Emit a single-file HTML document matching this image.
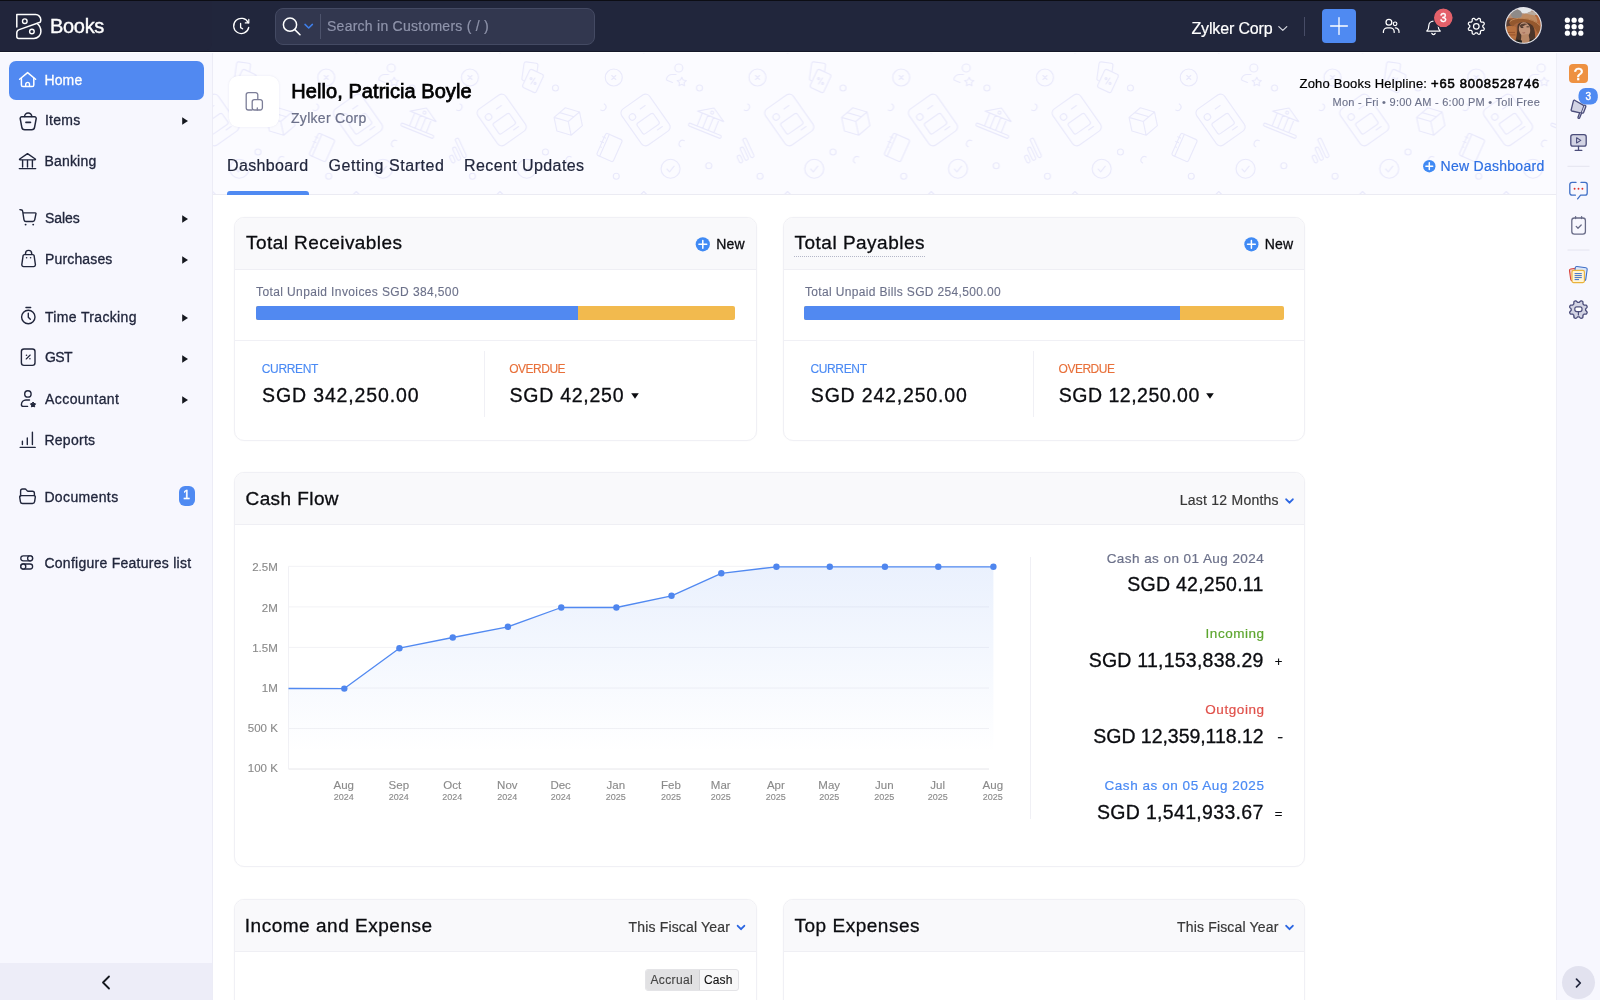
<!DOCTYPE html>
<html lang="en"><head><meta charset="utf-8"><title>Books - Dashboard</title>
<style>
*{box-sizing:border-box;margin:0;padding:0}
html,body{width:1600px;height:1000px;overflow:hidden;background:#fff}
body{will-change:transform;font-family:"Liberation Sans",sans-serif;position:relative;color:#21263c}
.t{position:absolute;line-height:1;white-space:nowrap}
.abs{position:absolute}
svg{position:absolute;overflow:visible}
#topbar{position:absolute;left:0;top:0;width:1600px;height:52px;background:#21263c;border-top:1px solid #0c0d14;border-bottom:1px solid #15182a}
#side{position:absolute;left:0;top:52px;width:213px;height:948px;background:#f7f7fe;border-right:1px solid #ececf6}
#hdr{position:absolute;left:213px;top:52px;width:1343px;height:143px;background:#fbfbff;border-bottom:1px solid #ebebf3;overflow:hidden}
#rail{position:absolute;left:1556px;top:52px;width:44px;height:948px;background:#f7f7fe;border-left:1px solid #efeff7}
.card{position:absolute;background:#fff;border:1px solid #f0f0f5;border-radius:10px;overflow:hidden;box-shadow:0 0 2px rgba(0,0,0,.03)}
.card .ch{position:absolute;left:0;top:0;right:0;background:#f9f9fb;border-bottom:1px solid #efeff4}

</style></head><body>
<div id="topbar"></div>
<div class="abs" style="left:0;top:1px;width:212px;height:50px;background:#21253b;border-radius:0 0 8px 0"></div>
<div class="t " style="left:50.00px;top:16.00px;font-size:20px;color:#fff;-webkit-text-stroke:0.4px;letter-spacing:-0.317px;">Books</div>
<div class="abs" style="left:275px;top:8px;width:320px;height:37px;background:#32374f;border:1px solid #444a63;border-radius:8px"></div>
<div class="abs" style="left:320px;top:14px;width:1px;height:25px;background:#4d536c"></div>
<div class="t " style="left:327.00px;top:19.00px;font-size:14px;color:#8f94ab;-webkit-text-stroke:0.2px;letter-spacing:0.256px;">Search in Customers ( / )</div>
<div class="t " style="left:1191.50px;top:21.00px;font-size:16px;color:#fff;-webkit-text-stroke:0.2px;letter-spacing:-0.153px;">Zylker Corp</div>
<div class="abs" style="left:1304px;top:17px;width:1px;height:19px;background:#474c66"></div>
<div class="abs" style="left:1322px;top:9px;width:34px;height:34px;background:#4f8af2;border-radius:4px"></div>
<svg style="left:1504.6px;top:7.1px" width="36.9" height="36.9" viewBox="0 0 37 37"><defs><clipPath id="avc"><circle cx="18.5" cy="18.5" r="17.3"/></clipPath><filter id="avb" x="-10%" y="-10%" width="120%" height="120%"><feGaussianBlur stdDeviation="0.55"/></filter></defs><circle cx="18.5" cy="18.5" r="18.45" fill="#e4e4ea"/><g clip-path="url(#avc)"><g filter="url(#avb)"><rect width="37" height="37" fill="#a5653f"/><rect x="0" y="0" width="37" height="11" fill="#b08d78"/><ellipse cx="20" cy="2.5" rx="7" ry="4" fill="#e4e7ea"/><ellipse cx="11.5" cy="7" rx="5.5" ry="4.5" fill="#8e8a88"/><ellipse cx="27" cy="7" rx="5" ry="2.6" fill="#b9a99c"/><rect x="30" y="8" width="7" height="24" fill="#b5683b"/><ellipse cx="4.5" cy="17" rx="4" ry="4.5" fill="#5a3d30"/><path d="M1 20 Q6 17.5 11 20 L12 32 L3 31 Z" fill="#b8713f"/><path d="M2.5 25.5 H10 M3 28 H10.5" stroke="#94502a" stroke-width="0.9"/><path d="M16.5 13 Q17 6.5 21 6.8 L29 8.2 Q32 9 32.5 15 Z" fill="#bd8a62"/><path d="M4 15.5 Q5 10.5 17 11.2 Q30 11.5 35.5 19 Q36.5 24 33 26.5 Q29 17.5 19 15.6 Q11 14.6 8 19.5 Q5 18.5 4 15.5 Z" fill="#94592f"/><path d="M5 14.5 Q9 10.8 18 11.4 Q29 12 35 18.5" stroke="#c08a5c" stroke-width="1" fill="none"/><path d="M12.5 19 Q13 15.2 19 15.4 Q27 16 29 21 Q31 27 30 37 L9 37 Q12.5 30 12.5 19 Z" fill="#4b3429"/><ellipse cx="19.6" cy="22.6" rx="5.6" ry="7.4" fill="#c3957a" transform="rotate(-12 19.6 22.6)"/><path d="M16.5 28 L23.5 27 L25.5 37 L15.5 37 Z" fill="#b88766"/><path d="M14.5 18.5 Q17 15.8 23 17 Q19 17.8 16 21 Z" fill="#5a3f31"/><path d="M16.2 20.6 h2.2 M21.6 19.9 h2.4" stroke="#3b2a22" stroke-width="0.9"/><path d="M17.6 25.8 q1.4 .6 2.6 -.1" stroke="#9c5f50" stroke-width="0.9" fill="none"/><path d="M9 37 L12 32.5 L17 33.5 L17 37 Z M24.5 33 L30 32 L31 37 L25 37 Z" fill="#24211f"/></g></g></svg>
<div id="side"></div>
<div class="abs" style="left:8.5px;top:60.5px;width:195px;height:39px;background:#5189f1;border-radius:7px"></div>
<div class="t " style="left:44.40px;top:73.00px;font-size:14px;color:#fff;-webkit-text-stroke:0.3px;letter-spacing:0.164px;">Home</div>
<div class="t " style="left:45.00px;top:113.00px;font-size:14px;color:#21263c;-webkit-text-stroke:0.3px;letter-spacing:0.234px;">Items</div>
<div class="t " style="left:44.40px;top:154.00px;font-size:14px;color:#21263c;-webkit-text-stroke:0.3px;letter-spacing:0.201px;">Banking</div>
<div class="t " style="left:45.00px;top:211.00px;font-size:14px;color:#21263c;-webkit-text-stroke:0.3px;letter-spacing:-0.044px;">Sales</div>
<div class="t " style="left:45.00px;top:252.00px;font-size:14px;color:#21263c;-webkit-text-stroke:0.3px;letter-spacing:0.151px;">Purchases</div>
<div class="t " style="left:45.00px;top:310.00px;font-size:14px;color:#21263c;-webkit-text-stroke:0.3px;letter-spacing:0.339px;">Time Tracking</div>
<div class="t " style="left:45.00px;top:350.00px;font-size:14px;color:#21263c;-webkit-text-stroke:0.3px;letter-spacing:-0.593px;">GST</div>
<div class="t " style="left:45.00px;top:392.00px;font-size:14px;color:#21263c;-webkit-text-stroke:0.3px;letter-spacing:0.435px;">Accountant</div>
<div class="t " style="left:44.40px;top:433.00px;font-size:14px;color:#21263c;-webkit-text-stroke:0.3px;letter-spacing:0.283px;">Reports</div>
<div class="t " style="left:44.40px;top:490.00px;font-size:14px;color:#21263c;-webkit-text-stroke:0.3px;letter-spacing:0.366px;">Documents</div>
<div class="t " style="left:44.40px;top:556.00px;font-size:14px;color:#21263c;-webkit-text-stroke:0.3px;letter-spacing:0.268px;">Configure Features list</div>
<svg style="left:181.8px;top:117.3px" width="6.2" height="8" viewBox="0 0 6.2 8"><path d="M0.2 0.2 L6 4 L0.2 7.8Z" fill="#15181f"/></svg>
<svg style="left:181.8px;top:214.8px" width="6.2" height="8" viewBox="0 0 6.2 8"><path d="M0.2 0.2 L6 4 L0.2 7.8Z" fill="#15181f"/></svg>
<svg style="left:181.8px;top:256.3px" width="6.2" height="8" viewBox="0 0 6.2 8"><path d="M0.2 0.2 L6 4 L0.2 7.8Z" fill="#15181f"/></svg>
<svg style="left:181.8px;top:313.8px" width="6.2" height="8" viewBox="0 0 6.2 8"><path d="M0.2 0.2 L6 4 L0.2 7.8Z" fill="#15181f"/></svg>
<svg style="left:181.8px;top:354.8px" width="6.2" height="8" viewBox="0 0 6.2 8"><path d="M0.2 0.2 L6 4 L0.2 7.8Z" fill="#15181f"/></svg>
<svg style="left:181.8px;top:396.3px" width="6.2" height="8" viewBox="0 0 6.2 8"><path d="M0.2 0.2 L6 4 L0.2 7.8Z" fill="#15181f"/></svg>
<div class="abs" style="left:178.5px;top:485.5px;width:16.8px;height:20.2px;background:#4f8af2;border-radius:6px"></div>
<div class="t " style="left:183.12px;top:489.00px;font-size:12.5px;color:#fff;-webkit-text-stroke:0.4px;">1</div>
<div class="abs" style="left:0;top:962.5px;width:212px;height:37.5px;background:#ededf8"></div>
<svg style="left:101px;top:975px" width="10" height="15" viewBox="0 0 10 15"><path d="M8 1.5 L2 7.5 L8 13.5" fill="none" stroke="#15181f" stroke-width="1.8" stroke-linecap="round" stroke-linejoin="round"/></svg>
<div id="hdr"></div>
<svg style="left:213px;top:53px;overflow:hidden" width="1343" height="141" viewBox="0 2 1343 141"><defs><pattern id="hp" patternUnits="userSpaceOnUse" x="-188" y="-1" width="287.5" height="170"><g fill="none" stroke="#e9e9fb" stroke-width="1.15" stroke-linecap="round" stroke-linejoin="round"><circle cx="13.75" cy="27.5" r="8.5"/><path d="M11.75 25.5 l4 4 m0 -4 l-4 4" /><circle cx="157.5" cy="27.5" r="8.5"/><path d="M155.5 25.5 l4 4 m0 -4 l-4 4" /><circle cx="78.75" cy="18" r="4"/><path d="M76 24.5 h-4 a6 6 0 0 0 -5.5 4 a1.5 1.5 0 0 0 1 2 l5 2" /><path d="M81.75 27.2 l1.4 2.8 3.1 .5 -2.2 2.2 .5 3.1 -2.8 -1.5 -2.8 1.5 .5 -3.1 -2.2 -2.2 3.1 -.5z" /><rect x="-7" y="-9.5" width="14" height="19" rx="2" transform="translate(217.5 22) rotate(8)"/><rect x="-7.5" y="-10" width="15" height="20" rx="2" fill="#fbfbff" transform="translate(220.5 31) rotate(25)"/><path d="M218.5 34 l4 -6" /><circle cx="218.6" cy="28.6" r="1"/><circle cx="222.6" cy="33.4" r="1"/><circle cx="99.5" cy="38" r="3"/><circle cx="243" cy="38" r="3"/><circle cx="108.75" cy="115.75" r="3"/><circle cx="16.25" cy="126.25" r="3"/><circle cx="160" cy="126.25" r="3"/><circle cx="233" cy="102" r="3"/><g transform="translate(45.5 70) rotate(-35)"><rect x="-17" y="-22" width="34" height="44" rx="5"/><circle cx="-9" cy="-10" r="3.2"/><rect x="-10" y="-2" width="20" height="13" rx="2"/><path d="M2 -12 h6 M4 15 h6"/></g><g transform="translate(189.25 70) rotate(-35)"><rect x="-17" y="-22" width="34" height="44" rx="5"/><circle cx="-9" cy="-10" r="3.2"/><rect x="-10" y="-2" width="20" height="13" rx="2"/><path d="M2 -12 h6 M4 15 h6"/></g><g transform="translate(108.75 71) rotate(22)"><path d="M-14 -5 L0 -14 L14 -5 Z M-9 -5 V9 M-3 -5 V9 M3 -5 V9 M9 -5 V9 M-16 9 H16 a1.5 1.5 0 0 1 0 3 H-16 a1.5 1.5 0 0 1 0 -3"/><circle cx="0" cy="-9" r="1.5"/></g><g transform="translate(255.75 71.5) rotate(-12)"><path d="M0 -14 L13 -7 V7 L0 14 L-13 7 V-7 Z M-13 -7 L0 0 L13 -7 M0 0 V14 M-6.5 -10.5 L6.5 -3.5"/></g><path d="M-3.5 0 a3.5 3.5 0 0 1 7 0" transform="translate(146 57) rotate(120)"/><path d="M-3.5 0 a3.5 3.5 0 0 1 7 0" transform="translate(82.5 93.75) rotate(-60)"/><path d="M-3.5 0 a3.5 3.5 0 0 1 7 0" transform="translate(2.5 57) rotate(120)"/><path d="M-3.5 0 a3.5 3.5 0 0 1 7 0" transform="translate(257 110) rotate(-60)"/><path d="M-3.5 0 a3.5 3.5 0 0 1 7 0" transform="translate(290 57) rotate(120)"/><g transform="translate(143 101) rotate(-25)"><rect x="-8" y="2" width="3.6" height="8" rx="1.8"/><rect x="-1.8" y="-4" width="3.6" height="14" rx="1.8"/><rect x="4.4" y="-11" width="3.6" height="21" rx="1.8"/></g><g transform="translate(9.5 97.5) rotate(24)"><rect x="-9" y="-12" width="18" height="24" rx="2"/><path d="M-5.5 -12 V12 M-10.5 -7 h3 M-10.5 -2 h3 M-10.5 3 h3 M-10.5 8 h3"/></g><g transform="translate(297 97.5) rotate(24)"><rect x="-9" y="-12" width="18" height="24" rx="2"/><path d="M-5.5 -12 V12"/></g><circle cx="70.5" cy="118.75" r="9.5"/><path d="M66.9 119 l2.6 2.8 4.6 -5.6" /><circle cx="214.25" cy="118.75" r="9.5"/><path d="M210.65 119 l2.6 2.8 4.6 -5.6" /><path d="M40.25 145 l3.5 -3.5 3.5 3.5" /><path d="M41.25 1 l2.5 2 2.5 -2" /><path d="M184 145 l3.5 -3.5 3.5 3.5" /><path d="M185 1 l2.5 2 2.5 -2" /></g></pattern></defs><rect width="1343" height="143" fill="url(#hp)"/></svg>
<div class="abs" style="left:229.2px;top:76.3px;width:50.2px;height:50.6px;background:#fff;box-shadow:0 0 2px rgba(110,110,170,0.16);border-radius:9px"></div>
<div class="t " style="left:291.30px;top:81.00px;font-size:20px;color:#000;-webkit-text-stroke:0.75px;letter-spacing:0.064px;">Hello, Patricia Boyle</div>
<div class="t " style="left:291.00px;top:111.00px;font-size:14px;color:#6c718a;-webkit-text-stroke:0.2px;letter-spacing:0.287px;">Zylker Corp</div>
<div class="t " style="left:227.00px;top:158.00px;font-size:16px;color:#21263c;-webkit-text-stroke:0.2px;letter-spacing:0.358px;">Dashboard</div>
<div class="t " style="left:328.50px;top:158.00px;font-size:16px;color:#21263c;-webkit-text-stroke:0.2px;letter-spacing:0.559px;">Getting Started</div>
<div class="t " style="left:464.00px;top:158.00px;font-size:16px;color:#21263c;-webkit-text-stroke:0.2px;letter-spacing:0.412px;">Recent Updates</div>
<div class="abs" style="left:227px;top:191px;width:82px;height:4px;background:#4f8af2;border-radius:3px 3px 0 0"></div>
<div class="t " style="left:1299.50px;top:77.00px;font-size:13px;color:#000;-webkit-text-stroke:0.2px;letter-spacing:0.206px;">Zoho Books Helpline: </div>
<div class="t " style="left:1431.00px;top:77.00px;font-size:13px;color:#000;-webkit-text-stroke:0.55px;letter-spacing:0.788px;">+65 8008528746</div>
<div class="t " style="left:1332.50px;top:97.00px;font-size:11px;color:#6c718a;-webkit-text-stroke:0.12px;letter-spacing:0.256px;">Mon - Fri • 9:00 AM - 6:00 PM • Toll Free</div>
<div class="t " style="left:1440.50px;top:159.00px;font-size:14px;color:#2d6fe3;-webkit-text-stroke:0.2px;letter-spacing:0.278px;">New Dashboard</div>
<div id="rail"></div>
<div class="abs" style="left:1562px;top:966px;width:33px;height:33px;background:#e2e2ef;border-radius:50%"></div>
<svg style="left:1575px;top:978px" width="7" height="10" viewBox="0 0 7 10"><path d="M1.5 1.2 L5.3 5 L1.5 8.8" fill="none" stroke="#21263c" stroke-width="1.7" stroke-linecap="round" stroke-linejoin="round"/></svg>
<div class="card" style="left:234px;top:216.5px;width:522.5px;height:224px"><div class="ch" style="height:52px"></div></div>
<div class="t " style="left:246.00px;top:233.00px;font-size:19px;color:#0b0c10;-webkit-text-stroke:0.3px;letter-spacing:0.446px;">Total Receivables</div>
<div class="t " style="left:716.20px;top:237.00px;font-size:14px;color:#0b0c10;-webkit-text-stroke:0.3px;letter-spacing:0.198px;">New</div>
<div class="abs" style="left:234px;top:340.2px;width:522px;height:1px;background:#f0f0f5"></div>
<div class="t " style="left:256.00px;top:286.00px;font-size:12px;color:#6c718a;-webkit-text-stroke:0.12px;letter-spacing:0.390px;">Total Unpaid Invoices SGD 384,500</div>
<div class="abs" style="left:255.5px;top:306px;width:479.5px;height:13.7px;background:#f2ba4e;border-radius:2px;overflow:hidden"><div style="width:322px;height:100%;background:#5189f1"></div></div>
<div class="abs" style="left:484px;top:351px;width:1px;height:66px;background:#f0f0f5"></div>
<div class="t " style="left:261.80px;top:363.00px;font-size:12px;color:#4a8af4;-webkit-text-stroke:0.12px;letter-spacing:-0.338px;">CURRENT</div>
<div class="t " style="left:262.00px;top:386.00px;font-size:19.5px;color:#0b0c10;-webkit-text-stroke:0.3px;letter-spacing:0.874px;">SGD 342,250.00</div>
<div class="t " style="left:509.30px;top:363.00px;font-size:12px;color:#e8703a;-webkit-text-stroke:0.12px;letter-spacing:-0.506px;">OVERDUE</div>
<div class="t " style="left:509.50px;top:386.00px;font-size:19.5px;color:#0b0c10;-webkit-text-stroke:0.3px;letter-spacing:0.748px;">SGD 42,250</div>
<svg style="left:631px;top:392.5px" width="8" height="6" viewBox="0 0 8 6"><path d="M0.2 0.3 H7.8 L4 5.8Z" fill="#0b0c10"/></svg>
<div class="card" style="left:783px;top:216.5px;width:522px;height:224px"><div class="ch" style="height:52px"></div></div>
<div class="t " style="left:794.50px;top:233.00px;font-size:19px;color:#0b0c10;-webkit-text-stroke:0.3px;letter-spacing:0.495px;">Total Payables</div>
<div class="abs" style="left:794px;top:256px;width:131px;height:0;border-top:1px dotted #b4b7c8"></div>
<div class="t " style="left:1264.80px;top:237.00px;font-size:14px;color:#0b0c10;-webkit-text-stroke:0.3px;letter-spacing:0.198px;">New</div>
<div class="abs" style="left:783px;top:340.2px;width:522px;height:1px;background:#f0f0f5"></div>
<div class="t " style="left:805.00px;top:286.00px;font-size:12px;color:#6c718a;-webkit-text-stroke:0.12px;letter-spacing:0.340px;">Total Unpaid Bills SGD 254,500.00</div>
<div class="abs" style="left:804.3px;top:306px;width:479.5px;height:13.7px;background:#f2ba4e;border-radius:2px;overflow:hidden"><div style="width:375.5px;height:100%;background:#5189f1"></div></div>
<div class="abs" style="left:1032.5px;top:351px;width:1px;height:66px;background:#f0f0f5"></div>
<div class="t " style="left:810.40px;top:363.00px;font-size:12px;color:#4a8af4;-webkit-text-stroke:0.12px;letter-spacing:-0.338px;">CURRENT</div>
<div class="t " style="left:810.80px;top:386.00px;font-size:19.5px;color:#0b0c10;-webkit-text-stroke:0.3px;letter-spacing:0.824px;">SGD 242,250.00</div>
<div class="t " style="left:1058.60px;top:363.00px;font-size:12px;color:#e8703a;-webkit-text-stroke:0.12px;letter-spacing:-0.506px;">OVERDUE</div>
<div class="t " style="left:1058.80px;top:386.00px;font-size:19.5px;color:#0b0c10;-webkit-text-stroke:0.3px;letter-spacing:0.506px;">SGD 12,250.00</div>
<svg style="left:1206px;top:392.5px" width="8" height="6" viewBox="0 0 8 6"><path d="M0.2 0.3 H7.8 L4 5.8Z" fill="#0b0c10"/></svg>
<div class="card" style="left:234px;top:472px;width:1071px;height:394.5px"><div class="ch" style="height:52px"></div></div>
<div class="t " style="left:245.50px;top:489.00px;font-size:19px;color:#0b0c10;-webkit-text-stroke:0.3px;letter-spacing:0.417px;">Cash Flow</div>
<div class="t " style="left:1179.80px;top:493.00px;font-size:14px;color:#383838;-webkit-text-stroke:0.2px;letter-spacing:0.234px;">Last 12 Months</div>
<div class="card" style="left:234px;top:899px;width:522.5px;height:140px"><div class="ch" style="height:51.6px"></div></div>
<div class="t " style="left:244.80px;top:916.00px;font-size:19px;color:#0b0c10;-webkit-text-stroke:0.3px;letter-spacing:0.516px;">Income and Expense</div>
<div class="t " style="left:628.50px;top:920.00px;font-size:14px;color:#383838;-webkit-text-stroke:0.2px;letter-spacing:0.167px;">This Fiscal Year</div>
<div class="card" style="left:783px;top:899px;width:522px;height:140px"><div class="ch" style="height:51.6px"></div></div>
<div class="t " style="left:794.50px;top:916.00px;font-size:19px;color:#0b0c10;-webkit-text-stroke:0.3px;letter-spacing:0.512px;">Top Expenses</div>
<div class="t " style="left:1177.00px;top:920.00px;font-size:14px;color:#383838;-webkit-text-stroke:0.2px;letter-spacing:0.167px;">This Fiscal Year</div>
<div class="abs" style="left:645px;top:968.5px;width:93.5px;height:22.5px;background:#f8f8f9;border:1px solid #e4e4e7;border-radius:3px;overflow:hidden"><div style="width:53.5px;height:100%;background:#e1e1e3;border-right:1px solid #d2d2d5"></div></div>
<div class="t " style="left:650.50px;top:974.00px;font-size:12px;color:#444;-webkit-text-stroke:0.12px;letter-spacing:0.355px;">Accrual</div>
<div class="t " style="left:704.00px;top:974.00px;font-size:12px;color:#111;-webkit-text-stroke:0.12px;letter-spacing:0.122px;">Cash</div>
<div class="abs" style="left:0;top:52px;width:1600px;height:1.3px;background:#fff"></div>
<svg style="left:0;top:0" width="1600" height="1000" viewBox="0 0 1600 1000"><defs><linearGradient id="cf" x1="0" y1="0" x2="0" y2="1"><stop offset="0" stop-color="#5189f1" stop-opacity="0.12"/><stop offset="0.92" stop-color="#5189f1" stop-opacity="0.0"/></linearGradient></defs><line x1="288.5" y1="566.3" x2="989" y2="566.3" stroke="#f2f2f5" stroke-width="1"/><line x1="288.5" y1="606.9" x2="989" y2="606.9" stroke="#f2f2f5" stroke-width="1"/><line x1="288.5" y1="647.4" x2="989" y2="647.4" stroke="#f2f2f5" stroke-width="1"/><line x1="288.5" y1="688" x2="989" y2="688" stroke="#f2f2f5" stroke-width="1"/><line x1="288.5" y1="728.5" x2="989" y2="728.5" stroke="#f2f2f5" stroke-width="1"/><line x1="288.5" y1="769" x2="989" y2="769" stroke="#e6e6ea" stroke-width="1"/><line x1="288.5" y1="566.3" x2="288.5" y2="769" stroke="#f1f1f5" stroke-width="1"/><path d="M288.50 688.50 L344.30 688.60 L399.43 648.20 L452.78 637.50 L507.91 626.80 L561.26 607.50 L616.39 607.50 L671.52 595.80 L721.31 573.30 L776.44 566.80 L829.79 566.80 L884.92 566.80 L938.27 566.80 L993.40 566.80 L993.40 769.00 L288.50 769.00 Z" fill="url(#cf)"/><path d="M288.50 688.50 L344.30 688.60 L399.43 648.20 L452.78 637.50 L507.91 626.80 L561.26 607.50 L616.39 607.50 L671.52 595.80 L721.31 573.30 L776.44 566.80 L829.79 566.80 L884.92 566.80 L938.27 566.80 L993.40 566.80" fill="none" stroke="#5189f1" stroke-width="1.3" stroke-linejoin="round"/><circle cx="344.30" cy="688.60" r="3.2" fill="#4f86ee"/><circle cx="399.43" cy="648.20" r="3.2" fill="#4f86ee"/><circle cx="452.78" cy="637.50" r="3.2" fill="#4f86ee"/><circle cx="507.91" cy="626.80" r="3.2" fill="#4f86ee"/><circle cx="561.26" cy="607.50" r="3.2" fill="#4f86ee"/><circle cx="616.39" cy="607.50" r="3.2" fill="#4f86ee"/><circle cx="671.52" cy="595.80" r="3.2" fill="#4f86ee"/><circle cx="721.31" cy="573.30" r="3.2" fill="#4f86ee"/><circle cx="776.44" cy="566.80" r="3.2" fill="#4f86ee"/><circle cx="829.79" cy="566.80" r="3.2" fill="#4f86ee"/><circle cx="884.92" cy="566.80" r="3.2" fill="#4f86ee"/><circle cx="938.27" cy="566.80" r="3.2" fill="#4f86ee"/><circle cx="993.40" cy="566.80" r="3.2" fill="#4f86ee"/></svg>
<div class="t " style="left:252.23px;top:562.00px;font-size:11.5px;color:#8a8a8a;-webkit-text-stroke:0.12px;">2.5M</div>
<div class="t " style="left:261.82px;top:603.00px;font-size:11.5px;color:#8a8a8a;-webkit-text-stroke:0.12px;">2M</div>
<div class="t " style="left:252.23px;top:643.00px;font-size:11.5px;color:#8a8a8a;-webkit-text-stroke:0.12px;">1.5M</div>
<div class="t " style="left:261.82px;top:683.00px;font-size:11.5px;color:#8a8a8a;-webkit-text-stroke:0.12px;">1M</div>
<div class="t " style="left:247.75px;top:723.00px;font-size:11.5px;color:#8a8a8a;-webkit-text-stroke:0.12px;">500 K</div>
<div class="t " style="left:247.75px;top:763.00px;font-size:11.5px;color:#8a8a8a;-webkit-text-stroke:0.12px;">100 K</div>
<div class="t " style="left:333.47px;top:780.00px;font-size:11.5px;color:#8a8a8a;-webkit-text-stroke:0.12px;">Aug</div>
<div class="t " style="left:333.69px;top:793.00px;font-size:9px;color:#8a8a8a;-webkit-text-stroke:0.12px;">2024</div>
<div class="t " style="left:388.60px;top:780.00px;font-size:11.5px;color:#8a8a8a;-webkit-text-stroke:0.12px;">Sep</div>
<div class="t " style="left:388.82px;top:793.00px;font-size:9px;color:#8a8a8a;-webkit-text-stroke:0.12px;">2024</div>
<div class="t " style="left:443.23px;top:780.00px;font-size:11.5px;color:#8a8a8a;-webkit-text-stroke:0.12px;">Oct</div>
<div class="t " style="left:442.17px;top:793.00px;font-size:9px;color:#8a8a8a;-webkit-text-stroke:0.12px;">2024</div>
<div class="t " style="left:497.08px;top:780.00px;font-size:11.5px;color:#8a8a8a;-webkit-text-stroke:0.12px;">Nov</div>
<div class="t " style="left:497.30px;top:793.00px;font-size:9px;color:#8a8a8a;-webkit-text-stroke:0.12px;">2024</div>
<div class="t " style="left:550.43px;top:780.00px;font-size:11.5px;color:#8a8a8a;-webkit-text-stroke:0.12px;">Dec</div>
<div class="t " style="left:550.65px;top:793.00px;font-size:9px;color:#8a8a8a;-webkit-text-stroke:0.12px;">2024</div>
<div class="t " style="left:606.52px;top:780.00px;font-size:11.5px;color:#8a8a8a;-webkit-text-stroke:0.12px;">Jan</div>
<div class="t " style="left:605.78px;top:793.00px;font-size:9px;color:#8a8a8a;-webkit-text-stroke:0.12px;">2025</div>
<div class="t " style="left:661.01px;top:780.00px;font-size:11.5px;color:#8a8a8a;-webkit-text-stroke:0.12px;">Feb</div>
<div class="t " style="left:660.91px;top:793.00px;font-size:9px;color:#8a8a8a;-webkit-text-stroke:0.12px;">2025</div>
<div class="t " style="left:710.81px;top:780.00px;font-size:11.5px;color:#8a8a8a;-webkit-text-stroke:0.12px;">Mar</div>
<div class="t " style="left:710.70px;top:793.00px;font-size:9px;color:#8a8a8a;-webkit-text-stroke:0.12px;">2025</div>
<div class="t " style="left:766.89px;top:780.00px;font-size:11.5px;color:#8a8a8a;-webkit-text-stroke:0.12px;">Apr</div>
<div class="t " style="left:765.83px;top:793.00px;font-size:9px;color:#8a8a8a;-webkit-text-stroke:0.12px;">2025</div>
<div class="t " style="left:818.33px;top:780.00px;font-size:11.5px;color:#8a8a8a;-webkit-text-stroke:0.12px;">May</div>
<div class="t " style="left:819.18px;top:793.00px;font-size:9px;color:#8a8a8a;-webkit-text-stroke:0.12px;">2025</div>
<div class="t " style="left:875.05px;top:780.00px;font-size:11.5px;color:#8a8a8a;-webkit-text-stroke:0.12px;">Jun</div>
<div class="t " style="left:874.31px;top:793.00px;font-size:9px;color:#8a8a8a;-webkit-text-stroke:0.12px;">2025</div>
<div class="t " style="left:930.32px;top:780.00px;font-size:11.5px;color:#8a8a8a;-webkit-text-stroke:0.12px;">Jul</div>
<div class="t " style="left:927.66px;top:793.00px;font-size:9px;color:#8a8a8a;-webkit-text-stroke:0.12px;">2025</div>
<div class="t " style="left:982.57px;top:780.00px;font-size:11.5px;color:#8a8a8a;-webkit-text-stroke:0.12px;">Aug</div>
<div class="t " style="left:982.79px;top:793.00px;font-size:9px;color:#8a8a8a;-webkit-text-stroke:0.12px;">2025</div>
<div class="abs" style="left:1030px;top:556.5px;width:1px;height:262px;background:#f0f0f5"></div>
<div class="t " style="left:1106.70px;top:552.00px;font-size:13.5px;color:#6c718a;-webkit-text-stroke:0.2px;letter-spacing:0.438px;">Cash as on 01 Aug 2024</div>
<div class="t " style="left:1127.20px;top:575.00px;font-size:19.5px;color:#0b0c10;-webkit-text-stroke:0.3px;letter-spacing:0.263px;">SGD 42,250.11</div>
<div class="t " style="left:1205.60px;top:627.00px;font-size:13.5px;color:#5da62f;-webkit-text-stroke:0.2px;letter-spacing:0.528px;">Incoming</div>
<div class="t " style="left:1088.70px;top:651.00px;font-size:19.5px;color:#0b0c10;-webkit-text-stroke:0.3px;letter-spacing:0.234px;">SGD 11,153,838.29</div>
<div class="t " style="left:1274.80px;top:655.00px;font-size:13px;color:#0b0c10;-webkit-text-stroke:0.2px;">+</div>
<div class="t " style="left:1205.30px;top:703.00px;font-size:13.5px;color:#e0504a;-webkit-text-stroke:0.2px;letter-spacing:0.564px;">Outgoing</div>
<div class="t " style="left:1093.30px;top:727.00px;font-size:19.5px;color:#0b0c10;-webkit-text-stroke:0.3px;letter-spacing:-0.037px;">SGD 12,359,118.12</div>
<div class="t " style="left:1277.64px;top:730.00px;font-size:13px;color:#0b0c10;-webkit-text-stroke:0.2px;transform:scaleX(1.35);">-</div>
<div class="t " style="left:1104.50px;top:779.00px;font-size:13.5px;color:#4a8af4;-webkit-text-stroke:0.2px;letter-spacing:0.551px;">Cash as on 05 Aug 2025</div>
<div class="t " style="left:1097.00px;top:803.00px;font-size:19.5px;color:#0b0c10;-webkit-text-stroke:0.3px;letter-spacing:0.317px;">SGD 1,541,933.67</div>
<div class="t " style="left:1274.80px;top:807.00px;font-size:13px;color:#0b0c10;-webkit-text-stroke:0.2px;">=</div>
<svg style="left:0;top:0" width="1600" height="1000" viewBox="0 0 1600 1000"><path d="M16.8 27 V14.6 H35.6 a5.2 5.2 0 0 1 5.2 5.2 c0 1 -0.2 1.8 -0.7 2.4 L19.2 29.6 a3.4 3.4 0 0 0 -2.4 3.2 V36.4 a2 2 0 0 0 2 2 H34 a6.9 6.9 0 0 0 6.9 -6.9 c0 -3.4 -1.6 -6.4 -3.9 -8.1" fill="none" stroke="#fff" stroke-width="1.5" stroke-linecap="round" stroke-linejoin="round" /><circle cx="24.8" cy="21.2" r="2.3" fill="none" stroke="#fff" stroke-width="1.4"/><circle cx="31.9" cy="31.5" r="2.3" fill="none" stroke="#fff" stroke-width="1.4"/><path d="M248.2 22.8 A7.6 7.6 0 1 0 248.7 27.5" fill="none" stroke="#fff" stroke-width="1.3" stroke-linecap="round" stroke-linejoin="round" /><path d="M248.8 19.4 V22.9 H245.3" fill="none" stroke="#fff" stroke-width="1.2" stroke-linecap="round" stroke-linejoin="round" /><path d="M240.6 23.4 V27.6 L242.6 28.8" fill="none" stroke="#fff" stroke-width="1.3" stroke-linecap="round" stroke-linejoin="round" /><circle cx="290" cy="24.7" r="6.6" fill="none" stroke="#fff" stroke-width="1.5"/><path d="M294.8 29.6 L300 34.8" fill="none" stroke="#fff" stroke-width="1.5" stroke-linecap="round" stroke-linejoin="round" /><path d="M305 24.4 L308.7 28 L312.4 24.4" fill="none" stroke="#3f7fea" stroke-width="1.5" stroke-linecap="round" stroke-linejoin="round" /><path d="M1278.8 26.6 L1282.8 30.4 L1286.8 26.6" fill="none" stroke="#d9dae2" stroke-width="1.2" stroke-linecap="round" stroke-linejoin="round" /><path d="M1339 17.6 V34.4 M1330.6 26 H1347.4" fill="none" stroke="#fff" stroke-width="1.3" stroke-linecap="round" stroke-linejoin="round" /><circle cx="1388.9" cy="22.3" r="2.9" fill="none" stroke="#fff" stroke-width="1.25"/><path d="M1383.4 32.4 V31.8 a4 4 0 0 1 4 -4 h2.8 a4 4 0 0 1 4 4 V32.4" fill="none" stroke="#fff" stroke-width="1.25" stroke-linecap="round" stroke-linejoin="round" /><circle cx="1395.1" cy="23.8" r="1.8" fill="none" stroke="#fff" stroke-width="1.2"/><path d="M1395.4 27.9 a3.6 3.6 0 0 1 3.6 3.6 V32.4" fill="none" stroke="#fff" stroke-width="1.2" stroke-linecap="round" stroke-linejoin="round" /><path d="M1426.8 31 c1.6 -1.2 2 -2.6 2 -5.2 a4.7 4.7 0 0 1 9.4 0 c0 2.6 0.4 4 2 5.2 Z" fill="none" stroke="#fff" stroke-width="1.25" stroke-linecap="round" stroke-linejoin="round" /><path d="M1431.8 33.3 a1.8 1.8 0 0 0 3.4 0" fill="none" stroke="#fff" stroke-width="1.25" stroke-linecap="round" stroke-linejoin="round" /><circle cx="1443.3" cy="17.8" r="9.9" fill="#e4616a" stroke="#21263c" stroke-width="1.2"/><path d="M1482.80 26.30 L1482.79 26.56 L1482.78 26.81 L1482.89 27.08 L1483.24 27.40 L1483.61 27.75 L1483.96 28.14 L1484.25 28.54 L1484.29 28.90 L1484.18 29.21 L1484.06 29.51 L1483.93 29.82 L1483.78 30.11 L1483.51 30.34 L1483.02 30.42 L1482.49 30.44 L1481.98 30.43 L1481.51 30.41 L1481.24 30.52 L1481.07 30.71 L1480.90 30.90 L1480.71 31.07 L1480.52 31.24 L1480.41 31.51 L1480.43 31.98 L1480.44 32.49 L1480.42 33.02 L1480.34 33.51 L1480.11 33.78 L1479.82 33.93 L1479.51 34.06 L1479.21 34.18 L1478.90 34.29 L1478.54 34.25 L1478.14 33.96 L1477.75 33.61 L1477.40 33.24 L1477.08 32.89 L1476.81 32.78 L1476.56 32.79 L1476.30 32.80 L1476.04 32.79 L1475.79 32.78 L1475.52 32.89 L1475.20 33.24 L1474.85 33.61 L1474.46 33.96 L1474.06 34.25 L1473.70 34.29 L1473.39 34.18 L1473.09 34.06 L1472.78 33.93 L1472.49 33.78 L1472.26 33.51 L1472.18 33.02 L1472.16 32.49 L1472.17 31.98 L1472.19 31.51 L1472.08 31.24 L1471.89 31.07 L1471.70 30.90 L1471.53 30.71 L1471.36 30.52 L1471.09 30.41 L1470.62 30.43 L1470.11 30.44 L1469.58 30.42 L1469.09 30.34 L1468.82 30.11 L1468.67 29.82 L1468.54 29.51 L1468.42 29.21 L1468.31 28.90 L1468.35 28.54 L1468.64 28.14 L1468.99 27.75 L1469.36 27.40 L1469.71 27.08 L1469.82 26.81 L1469.81 26.56 L1469.80 26.30 L1469.81 26.04 L1469.82 25.79 L1469.71 25.52 L1469.36 25.20 L1468.99 24.85 L1468.64 24.46 L1468.35 24.06 L1468.31 23.70 L1468.42 23.39 L1468.54 23.09 L1468.67 22.78 L1468.82 22.49 L1469.09 22.26 L1469.58 22.18 L1470.11 22.16 L1470.62 22.17 L1471.09 22.19 L1471.36 22.08 L1471.53 21.89 L1471.70 21.70 L1471.89 21.53 L1472.08 21.36 L1472.19 21.09 L1472.17 20.62 L1472.16 20.11 L1472.18 19.58 L1472.26 19.09 L1472.49 18.82 L1472.78 18.67 L1473.09 18.54 L1473.39 18.42 L1473.70 18.31 L1474.06 18.35 L1474.46 18.64 L1474.85 18.99 L1475.20 19.36 L1475.52 19.71 L1475.79 19.82 L1476.04 19.81 L1476.30 19.80 L1476.56 19.81 L1476.81 19.82 L1477.08 19.71 L1477.40 19.36 L1477.75 18.99 L1478.14 18.64 L1478.54 18.35 L1478.90 18.31 L1479.21 18.42 L1479.51 18.54 L1479.82 18.67 L1480.11 18.82 L1480.34 19.09 L1480.42 19.58 L1480.44 20.11 L1480.43 20.62 L1480.41 21.09 L1480.52 21.36 L1480.71 21.53 L1480.90 21.70 L1481.07 21.89 L1481.24 22.08 L1481.51 22.19 L1481.98 22.17 L1482.49 22.16 L1483.02 22.18 L1483.51 22.26 L1483.78 22.49 L1483.93 22.78 L1484.06 23.09 L1484.18 23.39 L1484.29 23.70 L1484.25 24.06 L1483.96 24.46 L1483.61 24.85 L1483.24 25.20 L1482.89 25.52 L1482.78 25.79 L1482.79 26.04 Z" fill="none" stroke="#fff" stroke-width="1.25" stroke-linejoin="round"/><circle cx="1476.3" cy="26.3" r="2.8" fill="none" stroke="#fff" stroke-width="1.25"/><circle cx="1567.4" cy="20.2" r="2.6" fill="#fff"/><circle cx="1567.4" cy="26.7" r="2.6" fill="#fff"/><circle cx="1567.4" cy="33.2" r="2.6" fill="#fff"/><circle cx="1574.1" cy="20.2" r="2.6" fill="#fff"/><circle cx="1574.1" cy="26.7" r="2.6" fill="#fff"/><circle cx="1574.1" cy="33.2" r="2.6" fill="#fff"/><circle cx="1580.8" cy="20.2" r="2.6" fill="#fff"/><circle cx="1580.8" cy="26.7" r="2.6" fill="#fff"/><circle cx="1580.8" cy="33.2" r="2.6" fill="#fff"/><path d="M19.6 79.3 L27.6 72.6 L35.6 79.3" fill="none" stroke="#fff" stroke-width="1.5" stroke-linecap="round" stroke-linejoin="round" /><path d="M21.4 78.3 V85 a1.6 1.6 0 0 0 1.6 1.6 H32.2 a1.6 1.6 0 0 0 1.6 -1.6 V78.3" fill="none" stroke="#fff" stroke-width="1.5" stroke-linecap="round" stroke-linejoin="round" /><path d="M25.7 86.4 V84.3 a1.9 1.9 0 0 1 3.8 0 V86.4" fill="none" stroke="#fff" stroke-width="1.4" stroke-linecap="round" stroke-linejoin="round" /><path d="M21.8 116.8 H34.6 a1.6 1.6 0 0 1 1.6 1.9 L34.6 127.2 a3 3 0 0 1 -3 2.6 H24.8 a3 3 0 0 1 -3 -2.6 L20.2 118.7 a1.6 1.6 0 0 1 1.6 -1.9 Z" fill="none" stroke="#21263c" stroke-width="1.5" stroke-linecap="round" stroke-linejoin="round" /><path d="M24.6 116.6 a3.6 3.6 0 0 1 7.2 0" fill="none" stroke="#21263c" stroke-width="1.5" stroke-linecap="round" stroke-linejoin="round" /><path d="M26 122.3 H30.4" fill="none" stroke="#21263c" stroke-width="1.8" stroke-linecap="round" stroke-linejoin="round" /><path d="M27.5 153.6 L35.3 159 a0.5 0.5 0 0 1 -0.3 0.9 H20 a0.5 0.5 0 0 1 -0.3 -0.9 Z" fill="none" stroke="#21263c" stroke-width="1.4" stroke-linecap="round" stroke-linejoin="round" /><path d="M22.6 160.5 V167 M27.5 160.5 V167 M32.4 160.5 V167" fill="none" stroke="#21263c" stroke-width="1.4" stroke-linecap="round" stroke-linejoin="round" /><path d="M19.3 168.6 H35.7" fill="none" stroke="#21263c" stroke-width="1.4" stroke-linecap="round" stroke-linejoin="round" /><path d="M19.9 209.6 L21.7 210 a1.2 1.2 0 0 1 0.9 1 L24 219.8 a2 2 0 0 0 2 1.7 H32.7 a2 2 0 0 0 2 -1.6 L36 213.6 a0.6 0.6 0 0 0 -0.6 -0.7 H23" fill="none" stroke="#21263c" stroke-width="1.4" stroke-linecap="round" stroke-linejoin="round" /><circle cx="25.6" cy="224.6" r="0.95" fill="#21263c"/><circle cx="33.2" cy="224.6" r="0.95" fill="#21263c"/><path d="M24.4 254.6 H32.8 a1.3 1.3 0 0 1 1.3 1.1 L35.4 264.6 a1.8 1.8 0 0 1 -1.8 2 H23.6 a1.8 1.8 0 0 1 -1.8 -2 L23.1 255.7 a1.3 1.3 0 0 1 1.3 -1.1 Z" fill="none" stroke="#21263c" stroke-width="1.4" stroke-linecap="round" stroke-linejoin="round" /><path d="M25.5 254.4 V253.5 a3.1 3.1 0 0 1 6.2 0 V254.4" fill="none" stroke="#21263c" stroke-width="1.4" stroke-linecap="round" stroke-linejoin="round" /><circle cx="26.6" cy="257.7" r="0.8" fill="#21263c"/><circle cx="30.6" cy="257.7" r="0.8" fill="#21263c"/><circle cx="28.3" cy="317" r="6.7" fill="none" stroke="#21263c" stroke-width="1.4"/><path d="M26 307.5 H30.6" fill="none" stroke="#21263c" stroke-width="1.5" stroke-linecap="round" stroke-linejoin="round" /><path d="M28.3 313.3 V317.2 L30.3 319.2" fill="none" stroke="#21263c" stroke-width="1.4" stroke-linecap="round" stroke-linejoin="round" /><rect x="21.4" y="349" width="13.6" height="16.4" rx="2.6" fill="none" stroke="#21263c" stroke-width="1.4"/><path d="M26.2 359 L30.2 355" fill="none" stroke="#21263c" stroke-width="1.1" stroke-linecap="round" stroke-linejoin="round" /><circle cx="26.5" cy="355.3" r="0.8" fill="#21263c"/><circle cx="29.9" cy="358.7" r="0.8" fill="#21263c"/><circle cx="27.9" cy="393.9" r="3.2" fill="none" stroke="#21263c" stroke-width="1.4"/><path d="M29.5 400 H26 a4.6 4.6 0 0 0 -4.6 4.5 a1.9 1.9 0 0 0 1.9 1.9 H27.6" fill="none" stroke="#21263c" stroke-width="1.4" stroke-linecap="round" stroke-linejoin="round" /><path d="M33.05 402.00 L34.00 403.39 L35.62 403.87 L34.59 405.20 L34.64 406.88 L33.05 406.32 L31.46 406.88 L31.51 405.20 L30.48 403.87 L32.10 403.39 Z" fill="#21263c" stroke="#21263c" stroke-width="1" stroke-linejoin="round"/><path d="M22.4 441.2 V444.6 M27.3 438 V444.6 M32.4 432.2 V444.6" fill="none" stroke="#21263c" stroke-width="1.4" stroke-linecap="round" stroke-linejoin="round" /><path d="M20.2 447.4 H35.2" fill="none" stroke="#21263c" stroke-width="1.4" stroke-linecap="round" stroke-linejoin="round" /><path d="M20.6 496 V491 a2 2 0 0 1 2 -2 H25 a1.5 1.5 0 0 1 1.2 0.6 L27 490.6 a1.5 1.5 0 0 0 1.2 0.6 H32.4 a2 2 0 0 1 2 2 V495.6" fill="none" stroke="#21263c" stroke-width="1.4" stroke-linecap="round" stroke-linejoin="round" /><path d="M21 495.6 H34 a1.3 1.3 0 0 1 1.3 1.5 L34.6 501.6 a2.2 2.2 0 0 1 -2.2 1.9 H22.6 a2.2 2.2 0 0 1 -2.2 -1.9 L19.7 497.1 a1.3 1.3 0 0 1 1.3 -1.5 Z" fill="none" stroke="#21263c" stroke-width="1.4" stroke-linecap="round" stroke-linejoin="round" /><rect x="20.8" y="555.8" width="11.8" height="5" rx="2.5" fill="none" stroke="#21263c" stroke-width="1.3"/><rect x="20.8" y="564" width="11.8" height="5" rx="2.5" fill="none" stroke="#21263c" stroke-width="1.3"/><circle cx="30.1" cy="558.3" r="2.5" fill="#f7f7fe" stroke="#21263c" stroke-width="1.3"/><circle cx="23.3" cy="566.5" r="2.5" fill="#f7f7fe" stroke="#21263c" stroke-width="1.3"/><path d="M252 110 H248.4 a2.2 2.2 0 0 1 -2.2 -2.2 V94.8 a2.2 2.2 0 0 1 2.2 -2.2 H255.6 a2.2 2.2 0 0 1 2.2 2.2 V99" fill="none" stroke="#7c7e98" stroke-width="1.3" stroke-linecap="round" stroke-linejoin="round" /><path d="M254.4 99.6 H260.2 a2.2 2.2 0 0 1 2.2 2.2 V107.8 a2.2 2.2 0 0 1 -2.2 2.2 H254.4 a2.2 2.2 0 0 1 -2.2 -2.2 V101.8 a2.2 2.2 0 0 1 2.2 -2.2 Z" fill="none" stroke="#7c7e98" stroke-width="1.3" stroke-linecap="round" stroke-linejoin="round" /><path d="M257.3 110 V108" fill="none" stroke="#7c7e98" stroke-width="1.3" stroke-linecap="round" stroke-linejoin="round" /><circle cx="702.8" cy="244.3" r="7.1" fill="#408af4"/><path d="M698.895 244.3 H706.705 M702.8 240.395 V248.205" stroke="#fff" stroke-width="1.5" stroke-linecap="round"/><circle cx="1251.4" cy="244.3" r="7.1" fill="#408af4"/><path d="M1247.5 244.3 H1255.31 M1251.4 240.395 V248.205" stroke="#fff" stroke-width="1.5" stroke-linecap="round"/><circle cx="1429.3" cy="166.2" r="6.2" fill="#408af4"/><path d="M1425.89 166.2 H1432.71 M1429.3 162.79 V169.61" stroke="#fff" stroke-width="1.5" stroke-linecap="round"/><path d="M1286.2 499.3 L1289.5 502.7 L1292.8 499.3" fill="none" stroke="#2b66e2" stroke-width="1.9" stroke-linecap="round" stroke-linejoin="round" /><path d="M737.7 925.8 L741 929.2 L744.3 925.8" fill="none" stroke="#2b66e2" stroke-width="1.9" stroke-linecap="round" stroke-linejoin="round" /><path d="M1286.2 925.8 L1289.5 929.2 L1292.8 925.8" fill="none" stroke="#2b66e2" stroke-width="1.9" stroke-linecap="round" stroke-linejoin="round" /><rect x="1569" y="64" width="19" height="19" rx="4" fill="#ee9141"/><rect x="1578.5" y="88" width="19.3" height="16.5" rx="7" fill="#4f8af2"/><path d="M1574.6 100.2 L1584 105.6 L1581.2 113.2 L1571.8 111 a0.9 0.9 0 0 1 -0.6 -1.2 L1573.4 100.8 a0.9 0.9 0 0 1 1.2 -0.6 Z" fill="#d3d4e4" stroke="#4b4d7a" stroke-width="1.3" stroke-linecap="round" stroke-linejoin="round" /><path d="M1584.6 105.2 L1585.4 105.6 a0.9 0.9 0 0 1 0.4 1.1 L1583.6 112.6 a0.9 0.9 0 0 1 -1.1 0.5 L1581.6 112.8" fill="#d3d4e4" stroke="#4b4d7a" stroke-width="1.3" stroke-linecap="round" stroke-linejoin="round" /><path d="M1579.6 113 L1578 117.2 a0.9 0.9 0 0 0 1.7 0.6 L1581.4 113.4" fill="#d3d4e4" stroke="#4b4d7a" stroke-width="1.3" stroke-linecap="round" stroke-linejoin="round" /><rect x="1570.8" y="134.6" width="15.4" height="11.6" rx="2.2" fill="#d3d4e4" stroke="#4b4d7a" stroke-width="1.3"/><path d="M1576.6 137.8 V143 L1580.8 140.4 Z" fill="none" stroke="#4b4d7a" stroke-width="1.1" stroke-linecap="round" stroke-linejoin="round" /><path d="M1578.5 146.4 V150.2 M1575.2 150.4 H1581.8" fill="none" stroke="#4b4d7a" stroke-width="1.3" stroke-linecap="round" stroke-linejoin="round" /><path d="M1567.5 166.3 H1589.5 M1567.5 250 H1589.5" stroke="#e4e4ef" stroke-width="1"/><path d="M1576 182.4 H1572 a2.2 2.2 0 0 0 -2.2 2.2 V193 a2.2 2.2 0 0 0 2.2 2.2 H1575.4 M1581 182.4 H1585 a2.2 2.2 0 0 1 2.2 2.2 V193 a2.2 2.2 0 0 1 -2.2 2.2 H1580.6 L1577.6 198.8" fill="none" stroke="#3f6fc6" stroke-width="1.3" stroke-linecap="round" stroke-linejoin="round" /><circle cx="1574.6" cy="188.8" r="0.95" fill="#e0322c"/><circle cx="1578.5" cy="188.8" r="0.95" fill="#e0322c"/><circle cx="1582.4" cy="188.8" r="0.95" fill="#e0322c"/><rect x="1571.8" y="218" width="13.6" height="16.2" rx="2.6" fill="none" stroke="#686b87" stroke-width="1.3"/><path d="M1575.6 216.6 V218.6 M1581.6 216.6 V218.6" fill="none" stroke="#686b87" stroke-width="1.3" stroke-linecap="round" stroke-linejoin="round" /><path d="M1576.2 226.4 L1578 228.2 L1581.2 225" fill="none" stroke="#686b87" stroke-width="1.3" stroke-linecap="round" stroke-linejoin="round" /><rect x="1570" y="268.4" width="11" height="12" rx="1.5" fill="#f6c9c4" stroke="#d9453d" stroke-width="1.1" transform="rotate(-8 1575 274)"/><rect x="1574.6" y="267" width="12" height="13" rx="1.5" fill="#dbe7fb" stroke="#3f6fc6" stroke-width="1.1" transform="rotate(8 1580 273)"/><rect x="1572" y="270.4" width="12.4" height="12.2" rx="1.5" fill="#fff4d6" stroke="#eab33a" stroke-width="1.1"/><path d="M1574.6 273.6 H1581.8 M1574.6 275.6 H1581.8 M1574.6 277.6 H1581.8 M1574.6 279.6 H1579" stroke="#3f6fc6" stroke-width="1"/><path d="M1585.60 309.60 L1585.59 309.88 L1585.58 310.16 L1585.70 310.46 L1586.06 310.81 L1586.44 311.20 L1586.81 311.62 L1587.11 312.06 L1587.15 312.44 L1587.03 312.78 L1586.90 313.12 L1586.75 313.45 L1586.60 313.78 L1586.30 314.02 L1585.77 314.12 L1585.22 314.16 L1584.67 314.16 L1584.17 314.15 L1583.87 314.28 L1583.69 314.49 L1583.49 314.69 L1583.29 314.89 L1583.08 315.07 L1582.95 315.37 L1582.96 315.87 L1582.96 316.42 L1582.92 316.97 L1582.82 317.50 L1582.58 317.80 L1582.25 317.95 L1581.92 318.10 L1581.58 318.23 L1581.24 318.35 L1580.86 318.31 L1580.42 318.01 L1580.00 317.64 L1579.61 317.26 L1579.26 316.90 L1578.96 316.78 L1578.68 316.79 L1578.40 316.80 L1578.12 316.79 L1577.84 316.78 L1577.54 316.90 L1577.19 317.26 L1576.80 317.64 L1576.38 318.01 L1575.94 318.31 L1575.56 318.35 L1575.22 318.23 L1574.88 318.10 L1574.55 317.95 L1574.22 317.80 L1573.98 317.50 L1573.88 316.97 L1573.84 316.42 L1573.84 315.87 L1573.85 315.37 L1573.72 315.07 L1573.51 314.89 L1573.31 314.69 L1573.11 314.49 L1572.93 314.28 L1572.63 314.15 L1572.13 314.16 L1571.58 314.16 L1571.03 314.12 L1570.50 314.02 L1570.20 313.78 L1570.05 313.45 L1569.90 313.12 L1569.77 312.78 L1569.65 312.44 L1569.69 312.06 L1569.99 311.62 L1570.36 311.20 L1570.74 310.81 L1571.10 310.46 L1571.22 310.16 L1571.21 309.88 L1571.20 309.60 L1571.21 309.32 L1571.22 309.04 L1571.10 308.74 L1570.74 308.39 L1570.36 308.00 L1569.99 307.58 L1569.69 307.14 L1569.65 306.76 L1569.77 306.42 L1569.90 306.08 L1570.05 305.75 L1570.20 305.42 L1570.50 305.18 L1571.03 305.08 L1571.58 305.04 L1572.13 305.04 L1572.63 305.05 L1572.93 304.92 L1573.11 304.71 L1573.31 304.51 L1573.51 304.31 L1573.72 304.13 L1573.85 303.83 L1573.84 303.33 L1573.84 302.78 L1573.88 302.23 L1573.98 301.70 L1574.22 301.40 L1574.55 301.25 L1574.88 301.10 L1575.22 300.97 L1575.56 300.85 L1575.94 300.89 L1576.38 301.19 L1576.80 301.56 L1577.19 301.94 L1577.54 302.30 L1577.84 302.42 L1578.12 302.41 L1578.40 302.40 L1578.68 302.41 L1578.96 302.42 L1579.26 302.30 L1579.61 301.94 L1580.00 301.56 L1580.42 301.19 L1580.86 300.89 L1581.24 300.85 L1581.58 300.97 L1581.92 301.10 L1582.25 301.25 L1582.58 301.40 L1582.82 301.70 L1582.92 302.23 L1582.96 302.78 L1582.96 303.33 L1582.95 303.83 L1583.08 304.13 L1583.29 304.31 L1583.49 304.51 L1583.69 304.71 L1583.87 304.92 L1584.17 305.05 L1584.67 305.04 L1585.22 305.04 L1585.77 305.08 L1586.30 305.18 L1586.60 305.42 L1586.75 305.75 L1586.90 306.08 L1587.03 306.42 L1587.15 306.76 L1587.11 307.14 L1586.81 307.58 L1586.44 308.00 L1586.06 308.39 L1585.70 308.74 L1585.58 309.04 L1585.59 309.32 Z" fill="#d3d4e4" stroke="#4b4d7a" stroke-width="1.3" stroke-linejoin="round"/><rect x="1574.8" y="306.8" width="7.2" height="4.8" rx="2" fill="#fff" stroke="#4b4d7a" stroke-width="1.2"/><path d="M1578.4 311.8 V315" fill="none" stroke="#4b4d7a" stroke-width="1.2" stroke-linecap="round" stroke-linejoin="round" /></svg>
<div class="t " style="left:1573.87px;top:66.00px;font-size:17px;color:#fff;-webkit-text-stroke:0.5px;">?</div>
<div class="t " style="left:1585.42px;top:92.00px;font-size:10px;color:#fff;-webkit-text-stroke:0.4px;">3</div>
<div class="t " style="left:1439.96px;top:12.00px;font-size:12px;color:#fff;-webkit-text-stroke:0.35px;">3</div>
</body></html>
